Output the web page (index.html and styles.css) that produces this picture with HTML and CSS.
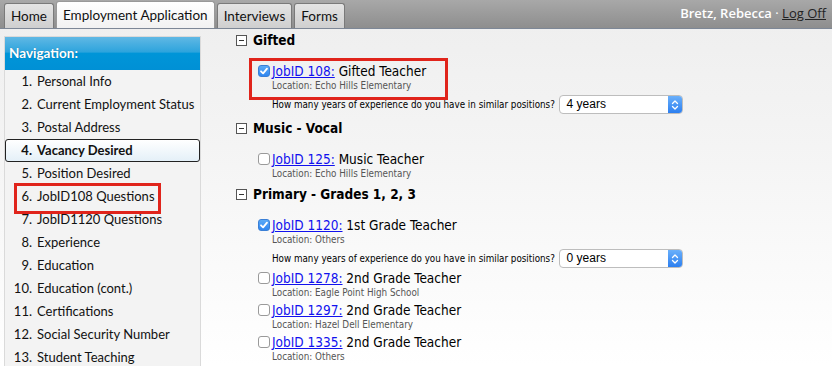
FILE: index.html
```html
<!DOCTYPE html>
<html>
<head>
<meta charset="utf-8">
<link rel="stylesheet" href="styles.css">
</head>
<body>
<div class="topbar">
  <nav class="tabs">
    <span class="tab">Home</span>
    <span class="tab active">Employment Application</span>
    <span class="tab">Interviews</span>
    <span class="tab">Forms</span>
  </nav>
  <div class="user"><b>Bretz, Rebecca</b> · <a href="#">Log Off</a></div>
</div>
<div class="main">
  <aside class="sidebar">
    <div class="side-head">Navigation:</div>
    <ol class="steps">
      <li><span class="num">1.</span>Personal Info</li>
      <li><span class="num">2.</span>Current Employment Status</li>
      <li><span class="num">3.</span>Postal Address</li>
      <li class="current"><span class="num">4.</span>Vacancy Desired</li>
      <li><span class="num">5.</span>Position Desired</li>
      <li class="flagged"><span class="num">6.</span>JobID108 Questions</li>
      <li><span class="num">7.</span>JobID1120 Questions</li>
      <li><span class="num">8.</span>Experience</li>
      <li><span class="num">9.</span>Education</li>
      <li><span class="num">10.</span>Education (cont.)</li>
      <li><span class="num">11.</span>Certifications</li>
      <li><span class="num">12.</span>Social Security Number</li>
      <li><span class="num">13.</span>Student Teaching</li>
    </ol>
  </aside>
  <section class="content">
    <div class="group">
      <h3 class="group-title"><span class="toggle"></span>Gifted</h3>
      <div class="job flagged">
        <div class="job-line"><span class="cb checked"><svg viewBox="0 0 12 12" width="12" height="12"><path d="M3 6.3 L5.1 8.4 L9 3.6" fill="none" stroke="#fff" stroke-width="1.8" stroke-linecap="round" stroke-linejoin="round"/></svg></span><a href="#">JobID 108:</a>&nbsp;Gifted Teacher</div>
        <div class="loc">Location: Echo Hills Elementary</div>
      </div>
      <div class="question">How many years of experience do you have in similar positions? <span class="select"><span class="val">4 years</span><span class="arrow"><svg viewBox="0 0 14 18" width="14" height="18"><path d="M4.5 7.5 L7 5 L9.5 7.5 M4.5 10.5 L7 13 L9.5 10.5" fill="none" stroke="#fff" stroke-width="1.3" stroke-linecap="round" stroke-linejoin="round"/></svg></span></span></div>
    </div>
    <div class="group">
      <h3 class="group-title"><span class="toggle"></span>Music - Vocal</h3>
      <div class="job">
        <div class="job-line"><span class="cb"></span><a href="#">JobID 125:</a>&nbsp;Music Teacher</div>
        <div class="loc">Location: Echo Hills Elementary</div>
      </div>
    </div>
    <div class="group">
      <h3 class="group-title"><span class="toggle"></span>Primary - Grades 1, 2, 3</h3>
      <div class="job">
        <div class="job-line"><span class="cb checked"><svg viewBox="0 0 12 12" width="12" height="12"><path d="M3 6.3 L5.1 8.4 L9 3.6" fill="none" stroke="#fff" stroke-width="1.8" stroke-linecap="round" stroke-linejoin="round"/></svg></span><a href="#">JobID 1120:</a>&nbsp;1st Grade Teacher</div>
        <div class="loc">Location: Others</div>
      </div>
      <div class="question">How many years of experience do you have in similar positions? <span class="select"><span class="val">0 years</span><span class="arrow"><svg viewBox="0 0 14 18" width="14" height="18"><path d="M4.5 7.5 L7 5 L9.5 7.5 M4.5 10.5 L7 13 L9.5 10.5" fill="none" stroke="#fff" stroke-width="1.3" stroke-linecap="round" stroke-linejoin="round"/></svg></span></span></div>
      <div class="job">
        <div class="job-line"><span class="cb"></span><a href="#">JobID 1278:</a>&nbsp;2nd Grade Teacher</div>
        <div class="loc">Location: Eagle Point High School</div>
      </div>
      <div class="job">
        <div class="job-line"><span class="cb"></span><a href="#">JobID 1297:</a>&nbsp;2nd Grade Teacher</div>
        <div class="loc">Location: Hazel Dell Elementary</div>
      </div>
      <div class="job">
        <div class="job-line"><span class="cb"></span><a href="#">JobID 1335:</a>&nbsp;2nd Grade Teacher</div>
        <div class="loc">Location: Others</div>
      </div>
    </div>
  </section>
</div>
</body>
</html>
```
FILE: styles.css
```css
* { box-sizing: border-box; }
html, body { margin: 0; padding: 0; }
body {
  width: 832px;
  height: 366px;
  overflow: hidden;
  background: linear-gradient(#eeeeee, #f4f4f4 40%, #ffffff);
  font-family: "DejaVu Sans Condensed", "DejaVu Sans", sans-serif;
  color: #000;
}
.topbar {
  height: 29px;
  display: flex;
  align-items: flex-end;
  justify-content: space-between;
  background: linear-gradient(#a8a8a8, #8e8e8e);
  border-bottom: 1px solid #7d8796;
  padding-left: 4px;
}
.tabs { display: flex; gap: 2px; align-items: flex-end; }
.tab {
  font-family: Lato, sans-serif;
  font-size: 13.5px;
  color: #111;
  height: 25px;
  line-height: 24px;
  padding: 0 6px;
  background: linear-gradient(#e4e4e4, #cfcfcf);
  border: 1px solid #7a7a7a;
  border-bottom: none;
  border-radius: 3px 3px 0 0;
  white-space: nowrap;
}
.tab.active {
  height: 27px;
  line-height: 26px;
  background: linear-gradient(#ffffff, #f2f2f2);
  border-color: #999;
}
.user {
  font-family: "Open Sans", sans-serif;
  font-size: 13px;
  color: #fff;
  padding: 0 6px 6px 0;
}
.user b { font-weight: 600; }
.user a { color: #222; }
.main { display: flex; }
.sidebar {
  width: 197px;
  margin: 7px 0 0 4px;
  background: #f3f3f3;
  border: 1px solid #dadada;
  border-bottom: none;
  height: 340px;
  flex: none;
}
.side-head {
  height: 33px;
  line-height: 32px;
  padding-left: 4px;
  font-family: Lato, sans-serif;
  font-size: 13.5px;
  font-weight: 700;
  color: #fff;
  text-shadow: 0 0 1px rgba(0,0,0,0.3);
  background: linear-gradient(#60b8e4, #2ea4dd 45%, #0095d8 50%, #0090d5);
}
.steps {
  list-style: none;
  margin: 0;
  padding: 0;
  font-family: Lato, sans-serif;
  font-size: 13px;
  color: #111;
}
.steps li {
  height: 23px;
  line-height: 23px;
  display: flex;
  position: relative;
  white-space: nowrap;
}
.steps .num {
  width: 27px;
  text-align: right;
  margin-right: 5px;
}
.steps li.current {
  font-weight: 700;
  border: 1px solid #222;
  border-radius: 3px;
  background: linear-gradient(#ffffff, #e4f0f8);
  line-height: 21px;
}
.steps li.current .num { margin-left: -1px; }
.steps li.flagged::after {
  content: "";
  position: absolute;
  left: 9px;
  top: -2px;
  width: 141px;
  height: 25px;
  border: 3px solid #e0241b;
}
.content {
  flex: 1;
  padding: 0 0 0 35px;
}
.group + .group { margin-top: 3px; }
.group-title {
  display: flex;
  align-items: center;
  margin: 0;
  height: 22px;
  font-size: 13.5px;
  font-weight: 700;
}
.toggle {
  width: 11px;
  height: 11px;
  border: 1px solid #555;
  margin-right: 6px;
  position: relative;
  background: #fff;
  flex: none;
}
.toggle::before {
  content: "";
  position: absolute;
  left: 2px;
  right: 2px;
  top: 4px;
  height: 1px;
  background: #333;
}
.job {
  margin: 2px 0 0 22px;
  position: relative;
}
.group-title + .job { margin-top: 11px; }
.question + .job { margin-top: 1px; }
.job.flagged::after {
  content: "";
  position: absolute;
  left: -9px;
  top: -4px;
  width: 193px;
  height: 36px;
  border: 3px solid #e0241b;
}
.job-line {
  display: flex;
  align-items: center;
  font-size: 13.5px;
  height: 18px;
  white-space: nowrap;
}
.job-line a { color: #1111ee; }
.cb {
  width: 12px;
  height: 12px;
  border: 1px solid #9a9a9a;
  border-radius: 3px;
  background: #fff;
  margin-right: 2px;
  display: inline-flex;
  flex: none;
}
.cb.checked {
  background: linear-gradient(#5aa9f6, #2f86f0);
  border-color: #3a7fd6;
}
.cb.checked svg { margin: -1px; }
.loc {
  font-size: 9.8px;
  color: #555;
  padding-left: 14px;
  height: 12px;
  line-height: 12px;
}
.question {
  margin: 3px 0 0 36px;
  font-size: 9.75px;
  display: flex;
  align-items: center;
  white-space: pre;
}
.select {
  display: inline-flex;
  width: 124px;
  height: 19px;
  border: 1px solid #bdbdbd;
  border-radius: 4px;
  background: #fff;
  overflow: hidden;
  margin-left: 1px;
}
.select .val { flex: 1; padding-left: 7px; font-size: 12px; line-height: 17px; font-family: "Liberation Sans", sans-serif; }
.select .arrow {
  width: 14px;
  background: linear-gradient(#6ab0fb, #2c7ff0);
  display: flex;
  align-items: center;
}
```
